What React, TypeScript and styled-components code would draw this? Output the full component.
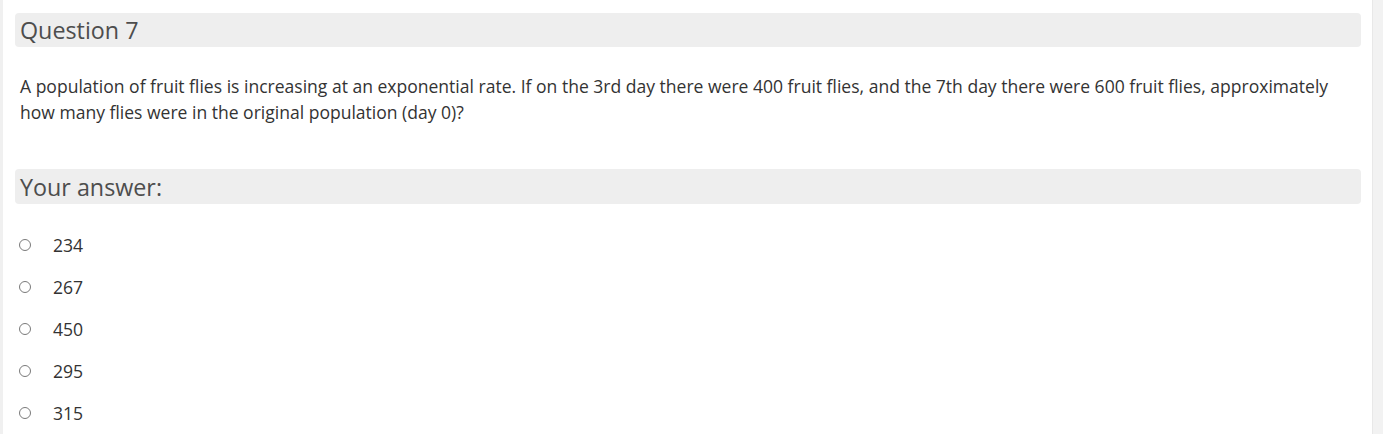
import styled, { createGlobalStyle } from 'styled-components';

const GlobalStyle = createGlobalStyle`
  html, body {
    margin: 0;
    padding: 0;
    background: #fff;
    font-family: 'Open Sans', 'Noto Sans', sans-serif;
  }
`;

const Page = styled.div`
  display: flex;
  width: 1383px;
  height: 434px;
  overflow: hidden;
`;

const LeftRule = styled.div`
  width: 3px;
  flex: none;
  background: #f0f0f0;
`;

const RightRail = styled.div`
  width: 10px;
  flex: none;
  background: #f2f2f2;
  border-left: 1px solid #e8e8e8;
`;

const Content = styled.div`
  flex: 1;
  padding: 13px 11px 0 12px;
`;

const SectionTitle = styled.div<{ $h?: number }>`
  background: #eeeeee;
  border-radius: 4px;
  height: ${(p) => p.$h ?? 34}px;
  display: flex;
  align-items: center;
  padding-left: 5px;
  font-size: 23.3px;
  color: #4d4d4d;
`;

const Prompt = styled.p`
  margin: 27px 0 44px;
  padding-left: 5px;
  font-size: 17.55px;
  line-height: 25.5px;
  color: #333;
`;

const Options = styled.div`
  display: flex;
  flex-direction: column;
  padding-top: 20px;
`;

const Option = styled.label`
  display: flex;
  align-items: center;
  height: 42px;
  font-size: 17.6px;
  color: #333;
`;

const Radio = styled.span`
  width: 10px;
  height: 10px;
  border: 1.3px solid #7a7a7a;
  border-radius: 50%;
  margin-left: 4px;
  margin-right: 22px;
  flex: none;
`;

const answers = ['234', '267', '450', '295', '315'];

export default function App() {
  return (
    <Page>
      <GlobalStyle />
      <LeftRule />
      <Content>
        <SectionTitle>Question 7</SectionTitle>
        <Prompt>
          A population of fruit flies is increasing at an exponential rate. If on the 3rd day there were 400 fruit flies, and the 7th day there were 600 fruit flies, approximately how many flies were in the original population (day 0)?
        </Prompt>
        <SectionTitle $h={35}>Your answer:</SectionTitle>
        <Options>
          {answers.map((a) => (
            <Option key={a}>
              <Radio />
              {a}
            </Option>
          ))}
        </Options>
      </Content>
      <RightRail />
    </Page>
  );
}
